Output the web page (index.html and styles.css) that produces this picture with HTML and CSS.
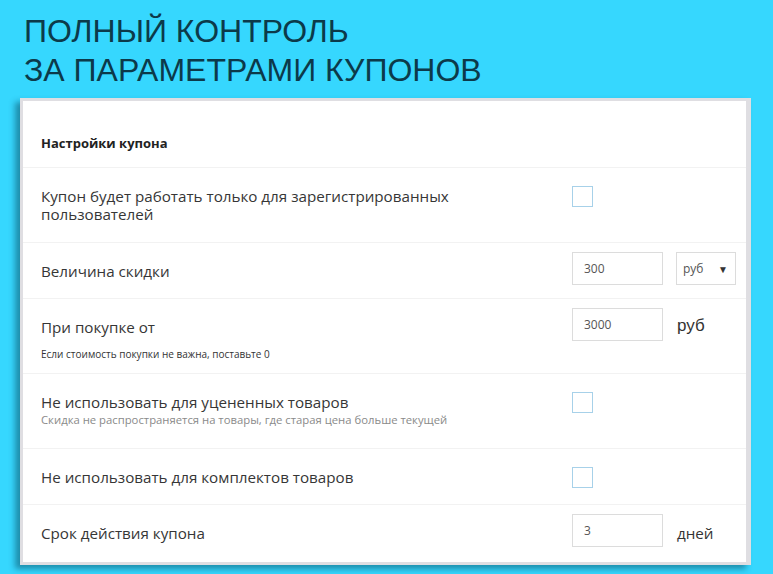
FILE: index.html
```html
<!DOCTYPE html>
<html lang="ru">
<head>
<meta charset="utf-8">
<title>Полный контроль за параметрами купонов</title>
<link rel="stylesheet" href="styles.css">
</head>
<body>
<h1 class="title">ПОЛНЫЙ КОНТРОЛЬ<br>ЗА ПАРАМЕТРАМИ КУПОНОВ</h1>
<div class="card">
  <div class="card-head">Настройки купона</div>

  <div class="row row-lg">
    <div class="label">Купон будет работать только для зарегистрированных пользователей</div>
    <div class="ctl ctl-check"><span class="check"></span></div>
  </div>

  <div class="row row-sm">
    <div class="label">Величина скидки</div>
    <div class="ctl ctl-input">
      <span class="input">300</span>
      <span class="select">руб<span class="arrow">▼</span></span>
    </div>
  </div>

  <div class="row row-lg">
    <div class="label">При покупке от
      <div class="note note-dark">Если стоимость покупки не важна, поставьте 0</div>
    </div>
    <div class="ctl ctl-input">
      <span class="input">3000</span>
      <span class="unit unit-big">руб</span>
    </div>
  </div>

  <div class="row row-lg">
    <div class="label">Не использовать для уцененных товаров
      <div class="note note-gray">Скидка не распространяется на товары, где старая цена больше текущей</div>
    </div>
    <div class="ctl ctl-check"><span class="check"></span></div>
  </div>

  <div class="row row-sm">
    <div class="label">Не использовать для комплектов товаров</div>
    <div class="ctl ctl-check"><span class="check"></span></div>
  </div>

  <div class="row row-sm row-last">
    <div class="label">Срок действия купона</div>
    <div class="ctl ctl-input">
      <span class="input">3</span>
      <span class="unit">дней</span>
    </div>
  </div>
</div>
</body>
</html>
```

FILE: styles.css
```css
html, body {
  margin: 0;
  padding: 0;
}
body {
  background: #36d7fe;
  height: 574px;
  overflow: hidden;
  font-family: "Open Sans", "Liberation Sans", sans-serif;
  color: #333;
}
.title {
  margin: 0;
  padding: 12px 0 0 24px;
  font-family: "Liberation Sans", Arial, sans-serif;
  font-weight: normal;
  font-size: 32px;
  line-height: 39px;
  color: #0c3a4a;
  height: 86px;
}
.card {
  box-sizing: border-box;
  margin-left: 20px;
  width: 731px;
  height: 467px;
  background: #fff;
  border: 3px solid #dfdee2;
  border-right-width: 5px;
  box-shadow: -5px 4px 6px rgba(0, 50, 70, 0.45);
}
.card-head {
  box-sizing: border-box;
  height: 67px;
  padding: 33px 18px 0 18px;
  font-size: 13px;
  line-height: 18px;
  font-weight: bold;
  color: #222;
  border-bottom: 1px solid #f2f2f2;
}
.row {
  box-sizing: border-box;
  display: flex;
  padding: 0 18px;
  border-bottom: 1px solid #f2f2f2;
}
.row-lg { min-height: 75px; }
.row-sm { min-height: 56px; }
.row-last { border-bottom: none; min-height: 57px; }
.label {
  box-sizing: border-box;
  width: 531px;
  flex: none;
  padding: 19px 40px 0 0;
  font-size: 15.2px;
  line-height: 18px;
  color: #363636;
}
.note {
  line-height: 16px;
}
.note-dark {
  margin-top: 10px;
  font-size: 10px;
  color: #333;
}
.note-gray {
  margin-top: 1px;
  font-size: 11.3px;
  color: #8a8a8a;
}
.ctl {
  display: flex;
  align-items: center;
}
.ctl-check {
  align-items: flex-start;
  padding-top: 18px;
}
.ctl-input {
  align-self: flex-start;
  padding-top: 9px;
}
.check {
  box-sizing: border-box;
  display: block;
  width: 21px;
  height: 21px;
  border: 1px solid #a7d1e9;
  background: #fff;
}
.input {
  box-sizing: border-box;
  display: block;
  width: 91px;
  height: 33px;
  border: 1px solid #dcdcdc;
  padding-left: 11px;
  font-size: 12px;
  line-height: 31px;
  color: #555;
}
.select {
  box-sizing: border-box;
  display: flex;
  justify-content: space-between;
  align-items: center;
  margin-left: 13px;
  width: 60px;
  height: 33px;
  border: 1px solid #dcdcdc;
  padding: 0 7px 0 6px;
  font-size: 12px;
  color: #555;
}
.arrow {
  font-size: 10px;
  color: #333;
}
.unit {
  margin-left: 14px;
  font-size: 15.2px;
  color: #333;
  padding-top: 4px;
}
.unit-big {
  font-family: "Liberation Sans", Arial, sans-serif;
  font-size: 17px;
  padding-top: 2px;
}
```
